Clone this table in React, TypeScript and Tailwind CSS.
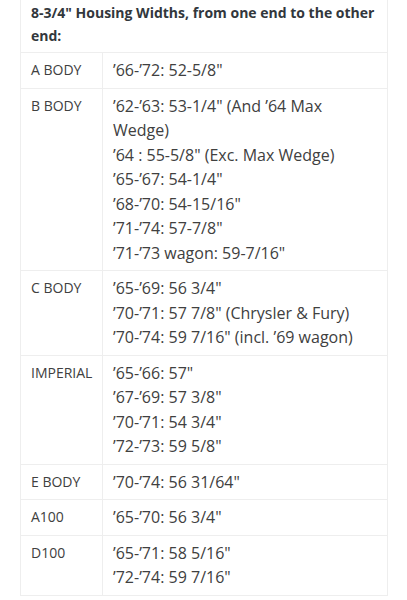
import React from "react";

const rows: { label: string; values: string[] }[] = [
  { label: "A BODY", values: ["’66-’72: 52-5/8\""] },
  {
    label: "B BODY",
    values: [
      "’62-’63: 53-1/4\" (And ’64 Max Wedge)",
      "’64 : 55-5/8\" (Exc. Max Wedge)",
      "’65-’67: 54-1/4\"",
      "’68-’70: 54-15/16\"",
      "’71-’74: 57-7/8\"",
      "’71-’73 wagon: 59-7/16\"",
    ],
  },
  {
    label: "C BODY",
    values: [
      "’65-’69: 56 3/4\"",
      "’70-’71: 57 7/8\" (Chrysler & Fury)",
      "’70-’74: 59 7/16\" (incl. ’69 wagon)",
    ],
  },
  {
    label: "IMPERIAL",
    values: ["’65-’66: 57\"", "’67-’69: 57 3/8\"", "’70-’71: 54 3/4\"", "’72-’73: 59 5/8\""],
  },
  { label: "E BODY", values: ["’70-’74: 56 31/64\""] },
  { label: "A100", values: ["’65-’70: 56 3/4\""] },
  { label: "D100", values: ["’65-’71: 58 5/16\"", "’72-’74: 59 7/16\""] },
];

export default function App() {
  return (
    <div
      className="w-[407px] h-[600px] bg-white overflow-hidden"
      style={{ fontFamily: '"Open Sans", sans-serif' }}
    >
      <div className="ml-[20px] w-[368px] border-x border-[#eeeeee]">
        <div className="px-[10px] pt-[1px] pb-[5px] border-b border-[#eeeeee] text-[14px] leading-[23px] font-bold text-[#32373c]">
          8-3/4" Housing Widths, from one end to the other end:
        </div>
        {rows.map((r) => (
          <div key={r.label} className="flex border-b border-[#eeeeee]">
            <div className="w-[82px] shrink-0 border-r border-[#eeeeee] px-[10px] py-[5px] text-[14px] leading-[24.5px] text-[#404040]">
              {r.label}
            </div>
            <div className="flex-1 px-[10px] py-[5px] text-[16px] leading-[24.5px] text-[#404040]">
              {r.values.map((v, i) => (
                <div key={i}>{v}</div>
              ))}
            </div>
          </div>
        ))}
      </div>
    </div>
  );
}
